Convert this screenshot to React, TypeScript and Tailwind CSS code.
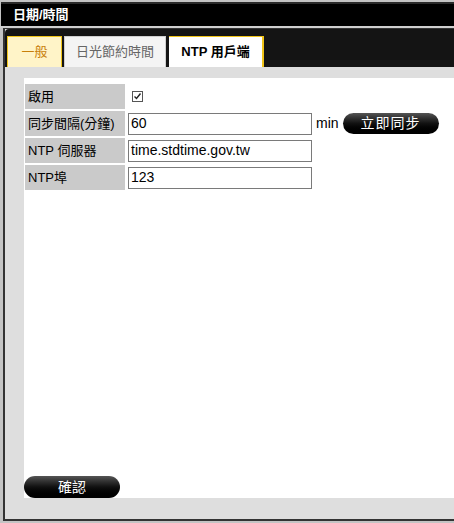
export default function App() {
  const font = { fontFamily: '"Liberation Sans", "Noto Sans CJK TC", sans-serif' };

  const rows: { label: string; value: "check" | string; extra?: boolean }[] = [
    { label: "啟用", value: "check" },
    { label: "同步間隔(分鐘)", value: "60", extra: true },
    { label: "NTP 伺服器", value: "time.stdtime.gov.tw" },
    { label: "NTP埠", value: "123" },
  ];

  return (
    <div
      style={font}
      className="w-[454px] h-[523px] bg-[#c4c4c4] flex flex-col overflow-hidden text-[13px] text-black"
    >
      {/* title bar */}
      <div className="mt-[2px] ml-[1px] border-t-[2px] border-[#2a2a2a] h-[24px] bg-black flex items-center pl-[12px] text-white font-bold text-[13px]">
        日期/時間
      </div>
      <div className="h-[2px] bg-[#cfcfcf]" />

      {/* main panel */}
      <div className="flex-1 ml-[3px] flex flex-col border-l-[2px] border-t-[1px] border-b-[2px] border-[#333] bg-[#dedede] mb-[2px]">
        {/* tabs */}
        <div className="h-[38px] bg-[#141414] flex items-end pl-[2px] gap-[2px] rounded-tl-[4px]">
          <div className="h-[31px] w-[55px] bg-[#fff4c8] border border-[#f0c419] border-b-0 flex items-center justify-center text-[#c87f0a]">
            一般
          </div>
          <div className="h-[31px] w-[102px] bg-[#f4f4f4] border border-[#cfcfcf] border-b-0 flex items-center justify-center text-[#666]">
            日光節約時間
          </div>
          <div className="ml-[1px] h-[31px] w-[95px] bg-white border-t border-r-[2px] border-[#f0c419] border-b-0 flex items-center justify-center font-bold">
            NTP 用戶端
          </div>
        </div>

        {/* content */}
        <div className="flex-1 pl-[19px] pt-[11px] pb-[21px] flex flex-col">
          <div className="flex-1 bg-white flex flex-col pt-[6px] pl-[1px]">
            <div className="flex flex-col gap-[2px]">
              {rows.map((r) => (
                <div key={r.label} className="flex items-center h-[25px]">
                  <div className="w-[100px] h-full bg-[#cacaca] flex items-center pl-[3px] whitespace-nowrap">
                    {r.label}
                  </div>
                  {r.value === "check" ? (
                    <div className="ml-[7px] w-[11px] h-[11px] border border-[#555] bg-white flex items-center justify-center">
                      <svg width="9" height="9" viewBox="0 0 9 9">
                        <path d="M1.5 4.5 L3.5 6.5 L7.5 1.5" fill="none" stroke="#222" strokeWidth="1.4" />
                      </svg>
                    </div>
                  ) : (
                    <div className="ml-[3px] w-[184px] h-[22px] border border-[#7a7a7a] flex items-center pl-[2px] text-[14px]">
                      {r.value}
                    </div>
                  )}
                  {r.extra && (
                    <>
                      <span className="ml-[4px] text-[14px]">min</span>
                      <button className="ml-[4px] w-[96px] h-[21px] rounded-full bg-gradient-to-b from-[#555] via-[#111] to-[#000] text-white text-[14px] tracking-[1px] flex items-center justify-center">
                        立即同步
                      </button>
                    </>
                  )}
                </div>
              ))}
            </div>
            <div className="flex-1" />
            <button className="-ml-[1px] w-[96px] h-[22px] rounded-full bg-gradient-to-b from-[#555] via-[#111] to-[#000] text-white text-[14px] flex items-center justify-center">
              確認
            </button>
          </div>
        </div>
      </div>
    </div>
  );
}
